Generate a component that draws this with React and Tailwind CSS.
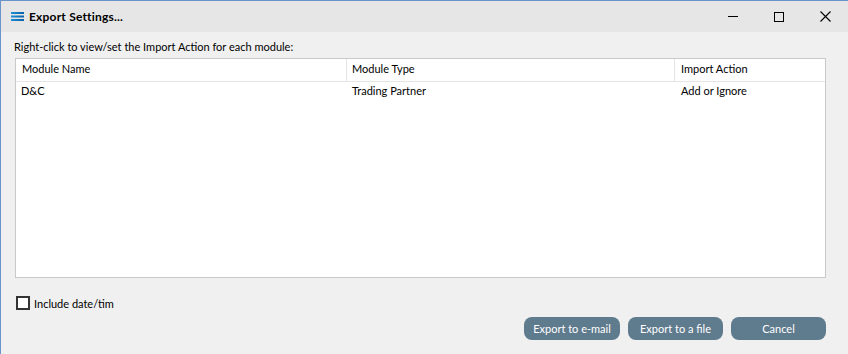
export default function App() {
  const font = { fontFamily: 'Lato, "Liberation Sans", sans-serif' };
  return (
    <div className="w-[848px] h-[354px] flex flex-col bg-[#f0f0f0] border-t border-l border-[#6a93c9] text-[11px] leading-[15px] text-black overflow-hidden" style={font}>
      <div className="h-[31px] shrink-0 bg-[#e6e6e6] flex items-center">
        <svg width="13" height="9" viewBox="0 0 13 9" className="ml-[10px]">
          <defs>
            <linearGradient id="g" x1="0" x2="1" y1="0" y2="0">
              <stop offset="0" stopColor="#1b8fd6" />
              <stop offset="1" stopColor="#0a5fa8" />
            </linearGradient>
          </defs>
          <rect x="0" y="0" width="13" height="2" fill="url(#g)" />
          <rect x="0" y="3.5" width="13" height="2" fill="url(#g)" />
          <rect x="0" y="7" width="13" height="2" fill="url(#g)" />
        </svg>
        <span className="ml-[5px] font-bold text-[12px] tracking-[0.2px]">Export Settings...</span>
        <div className="ml-auto flex items-center h-full">
          <div className="w-[46px] h-full flex items-center justify-center">
            <div className="w-[10px] h-px bg-black" />
          </div>
          <div className="w-[46px] h-full flex items-center justify-center">
            <div className="w-[10px] h-[10px] border border-black" />
          </div>
          <div className="w-[46px] h-full flex items-center justify-center">
            <svg width="11" height="11" viewBox="0 0 11 11"><path d="M0.5 0.5 L10.5 10.5 M10.5 0.5 L0.5 10.5" stroke="#000" strokeWidth="1.1" /></svg>
          </div>
        </div>
      </div>
      <div className="flex-1 flex flex-col px-[14px]">
        <div className="mt-[7px] ml-[-1px]">Right-click to view/set the Import Action for each module:</div>
        <div className="mt-[4px] w-[811px] h-[220px] bg-white border border-[#c9c9c9] flex flex-col">
          <div className="h-[23px] grid grid-cols-[331px_328px_1fr] border-b border-[#e5e5e5]">
            <div className="pl-[6px] pb-[3px] flex items-center border-r border-[#e5e5e5]">Module Name</div>
            <div className="pl-[5px] pb-[3px] flex items-center border-r border-[#e5e5e5]">Module Type</div>
            <div className="pl-[6px] pb-[3px] flex items-center">Import Action</div>
          </div>
          <div className="h-[20px] grid grid-cols-[331px_328px_1fr]">
            <div className="pl-[5px] pb-[3px] flex items-center">D&amp;C</div>
            <div className="pl-[5px] pb-[3px] flex items-center">Trading Partner</div>
            <div className="pl-[6px] pb-[3px] flex items-center">Add or Ignore</div>
          </div>
        </div>
        <div className="mt-[18px] h-[14px] flex items-center ml-[1px]">
          <div className="w-[14px] h-[14px] border-2 border-[#333] bg-white" />
          <span className="ml-[4px]">Include date/tim</span>
        </div>
        <div className="mt-[7px] flex justify-end gap-[8px] pr-[8px]">
          <button className="w-[96px] h-[23px] rounded-[8px] bg-[#5f7b8e] text-white text-[11px] leading-[15px]" style={font}>Export to e-mail</button>
          <button className="w-[95px] h-[23px] rounded-[8px] bg-[#5f7b8e] text-white text-[11px] leading-[15px]" style={font}>Export to a file</button>
          <button className="w-[95px] h-[23px] rounded-[8px] bg-[#5f7b8e] text-white text-[11px] leading-[15px]" style={font}>Cancel</button>
        </div>
      </div>
    </div>
  );
}
